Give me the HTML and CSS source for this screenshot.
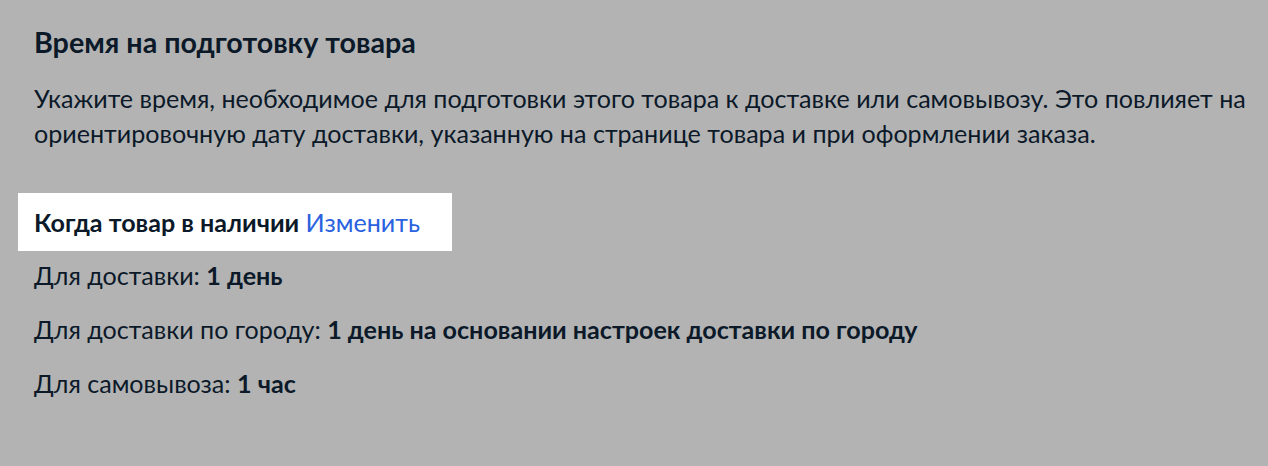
FILE: index.html
```html
<!DOCTYPE html>
<html lang="ru">
<head>
<meta charset="utf-8">
<link rel="stylesheet" href="styles.css">
</head>
<body>
<div class="page">
  <h2 class="title">Время на подготовку товара</h2>
  <p class="desc">Укажите время, необходимое для подготовки этого товара к доставке или самовывозу. Это повлияет на ориентировочную дату доставки, указанную на странице товара и при оформлении заказа.</p>
  <div class="highlight"><span class="hl-text">Когда товар в наличии</span> <a class="link" href="#">Изменить</a></div>
  <ul class="items">
    <li>Для доставки: <b>1 день</b></li>
    <li>Для доставки по городу: <b>1 день на основании настроек доставки по городу</b></li>
    <li>Для самовывоза: <b>1 час</b></li>
  </ul>
</div>
</body>
</html>
```
FILE: styles.css
```css
html, body {
  margin: 0;
  padding: 0;
  background: #b3b3b3;
  height: 100%;
}
body {
  font-family: Lato, "Noto Sans", sans-serif;
  color: #0b1929;
}
.page {
  padding: 24px 14px 0 34px;
  font-size: 25.1px;
  line-height: 35px;
}
.title {
  margin: 0;
  font-size: 28.7px;
  line-height: 36px;
  font-weight: 700;
}
.desc {
  margin: 21px 0 0;
}
.highlight {
  display: inline-block;
  margin: 42px 0 0 -16px;
  padding: 11.5px 32px 11.5px 16px;
  background: #ffffff;
}
.hl-text {
  font-weight: 700;
}
.link {
  color: #2a62df;
  text-decoration: none;
}
.items {
  list-style: none;
  margin: 6.5px 0 0;
  padding: 0;
  display: flex;
  flex-direction: column;
  gap: 19px;
}
.items b {
  font-weight: 700;
}
```
